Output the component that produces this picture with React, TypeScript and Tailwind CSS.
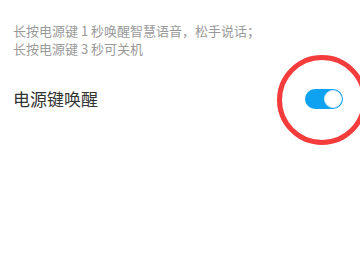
export default function App() {
    return (
        <div className="relative h-[270px] w-[360px] overflow-hidden bg-white" style={{ fontFamily: '"Noto Sans CJK SC", "Noto Sans", sans-serif' }}>
            {/* Description */}
            <div className="px-[13px] pt-[22px] text-[13px] leading-[18px] text-[#9a9a9a]">
                <p>长按电源键 1 秒唤醒智慧语音，松手说话；</p>
                <p>长按电源键 3 秒可关机</p>
            </div>

            {/* Setting row */}
            <div className="mt-[29px] flex items-center justify-between pl-[13px] pr-[17px]">
                <span className="text-[17px] leading-[24px] text-[#333333]">电源键唤醒</span>
                <div className="flex h-[20px] w-[38px] items-center justify-end rounded-full bg-[#0ea2f0] pr-[1px]">
                    <div className="h-[18px] w-[18px] rounded-full border border-[#d8eefb] bg-white" />
                </div>
            </div>

            {/* Red annotation circle */}
            <div className="pointer-events-none absolute left-[277px] top-[55px] h-[90px] w-[90px] rounded-full border-[5px] border-[#f43c3c]" />
        </div>
    );
}
